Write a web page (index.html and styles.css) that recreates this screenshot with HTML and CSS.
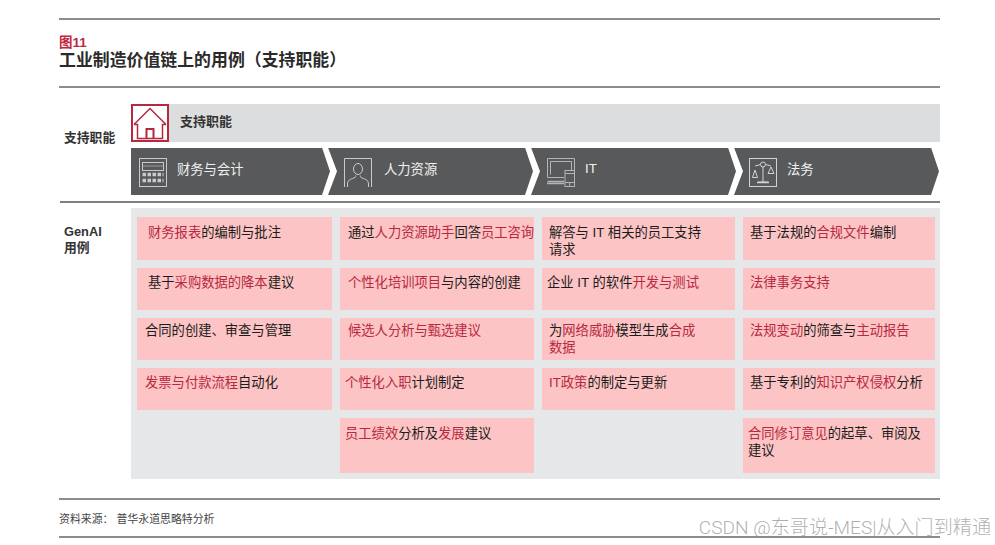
FILE: index.html
```html
<!DOCTYPE html>
<html lang="zh-CN">
<head>
<meta charset="utf-8">
<title>工业制造价值链上的用例（支持职能）</title>
<link rel="stylesheet" href="styles.css">
</head>
<body>
<main class="page">
  <div class="rule"></div>
  <header class="head">
    <div class="fig">图11</div>
    <h1 class="title">工业制造价值链上的用例（支持职能）</h1>
  </header>
  <div class="rule"></div>

  <section class="support">
    <div class="label label-support">支持职能</div>
    <div class="support-main">
      <div class="bar">
        <div class="home">
          <svg viewBox="0 0 34 34" width="34" height="34" fill="none" stroke="#b5283f" stroke-width="1.5">
            <path d="M1 18.5 17 2.5l16 16"/>
            <path d="M1 18.5h3.5V32.500h25V18.500H33"/>
            <path d="M13.500 32v-9h7v9" stroke-width="2"/>
          </svg>
        </div>
        <span class="bar-text">支持职能</span>
      </div>
      <div class="chevrons">
        <div class="chev chev-first">
          <svg class="ico" viewBox="0 0 28 29" fill="none" stroke="#c9cacb" stroke-width="1">
            <rect x=".5" y=".5" width="27" height="28"/>
            <rect x="3.500" y="4.500" width="21" height="8"/>
            <path d="M3.500 8h21" stroke-width=".6"/>
            <path stroke-width="3.500" stroke-dasharray="3.500 1.500" d="M3.500 16.500h21M3.500 22.500h21"/>
          </svg>
          <span class="chev-text">财务与会计</span>
        </div>
        <div class="chev">
          <svg class="ico" viewBox="0 0 28 29" fill="none" stroke="#c9cacb" stroke-width="1">
            <path d="M.5 29V.5h27V29"/>
            <ellipse cx="14" cy="11" rx="4.500" ry="5.500"/>
            <path d="M3.500 29v-3c0-5 5-5 7.500-6.500 .6-.5 .6-1 .6-2M24.500 29v-3c0-5-5-5-7.500-6.500-.6-.5-.6-1-.6-2"/>
          </svg>
          <span class="chev-text chev-text-wide">人力资源</span>
        </div>
        <div class="chev">
          <svg class="ico" viewBox="0 0 28 29" fill="none" stroke="#b4b5b6" stroke-width="1">
            <path d="M17 19.500H.5V.5h27v12"/>
            <path d="M3.500 16.500V3.500h21v9"/>
            <path d="M.5 23.500H17M0 25.500h17" stroke-width="1.300"/>
            <rect x="18" y="12.500" width="9.500" height="16" fill="#58595b"/>
            <path d="M18 15.500h9.500M18 24.500h9.500M22.700 24.500v4"/>
          </svg>
          <span class="chev-text">IT</span>
        </div>
        <div class="chev chev-last">
          <svg class="ico" viewBox="0 0 28 29" fill="none" stroke="#d2d3d4" stroke-width="1">
            <rect x=".5" y=".5" width="27" height="28"/>
            <circle cx="14" cy="6.500" r="2.500"/>
            <path d="M14 9v15M9 24h10" />
            <path d="M8 24.500h12" stroke-width="1.500"/>
            <path d="M11.500 6.500 6 8M16.500 6.500 22 8"/>
            <path d="M6 12 3.500 19.500h5ZM22 9l-3 6.500h6Z"/>
          </svg>
          <span class="chev-text">法务</span>
        </div>
      </div>
    </div>
  </section>

  <div class="rule rule-thin"></div>

  <section class="usecases">
    <div class="label label-gen">GenAI<br>用例</div>
    <div class="grid">
      <div class="cell ind"><em>财务报表</em>的编制与批注</div>
      <div class="cell nowrap">通过<em>人力资源助手</em>回答<em>员工咨询</em></div>
      <div class="cell">解答与 IT 相关的员工支持<br>请求</div>
      <div class="cell">基于法规的<em>合规文件</em>编制</div>

      <div class="cell ind r2">基于<em>采购数据的降本</em>建议</div>
      <div class="cell r2"><em>个性化培训项目</em>与内容的创建</div>
      <div class="cell r2 out">企业 IT 的软件<em>开发与测试</em></div>
      <div class="cell r2"><em>法律事务支持</em></div>

      <div class="cell r3">合同的创建、审查与管理</div>
      <div class="cell r3"><em>候选人分析与甄选建议</em></div>
      <div class="cell r3">为<em>网络威胁</em>模型生成<em>合成</em><br><em>数据</em></div>
      <div class="cell r3"><em>法规变动</em>的筛查与<em>主动报告</em></div>

      <div class="cell r2"><em>发票与付款流程</em>自动化</div>
      <div class="cell r2 out"><em>个性化入职</em>计划制定</div>
      <div class="cell r2"><em>IT政策</em>的制定与更新</div>
      <div class="cell r2">基于专利的<em>知识产权侵权</em>分析</div>

      <div class="blank"></div>
      <div class="cell out"><em>员工绩效</em>分析及<em>发展</em>建议</div>
      <div class="blank"></div>
      <div class="cell out"><em>合同修订意见</em>的起草、审阅及<br>建议</div>
    </div>
  </section>

  <div class="rule rule-foot"></div>
  <footer class="foot">资料来源：&nbsp;普华永道思略特分析</footer>
  <div class="rule"></div>
</main>
<div class="watermark">CSDN @东哥说-MES|从入门到精通</div>
</body>
</html>
```

FILE: styles.css
```css
* { box-sizing: border-box; }

html, body {
  margin: 0;
  height: 545px;
  overflow: hidden;
  background: #fff;
}

body {
  position: relative;
  font-family: "Liberation Sans", "Noto Sans CJK SC", sans-serif;
  color: #222;
}

.page {
  width: 940px;
  padding: 18px 0 0 59px;
}

.rule {
  height: 2px;
  background: #8b8c8d;
}

.rule-thin {
  height: 2px;
  margin: 6px 0 0 1px;
  background: #7f8081;
}

.rule-foot {
  margin-top: 19px;
}

.head {
  height: 66px;
  padding-top: 15px;
}

.fig {
  font-size: 13.500px;
  line-height: 16px;
  font-weight: 700;
  color: #c0283f;
}

.title {
  margin: 0;
  font-size: 16.900px;
  line-height: 19px;
  font-weight: 700;
  color: #2a2a2a;
}

.support,
.usecases {
  display: flex;
}

.support {
  margin-top: 16px;
}

.label {
  width: 72px;
  flex: none;
  padding-left: 5px;
  font-size: 12.800px;
  line-height: 16px;
  font-weight: 700;
  color: #333;
}

.label-support {
  padding-top: 26px;
}

.label-gen {
  padding-top: 16px;
}

.support-main {
  width: 809px;
}

.bar {
  display: flex;
  align-items: center;
  height: 38px;
  background: #dcddde;
}

.home {
  display: flex;
  align-items: center;
  justify-content: center;
  width: 38px;
  height: 38px;
  background: #fff;
  border: 2px solid #b5283f;
}

.bar-text {
  margin: 0 0 5px 11px;
  font-size: 13px;
  font-weight: 700;
  color: #333;
}

.chevrons {
  display: flex;
  margin-top: 5.500px;
  height: 47.500px;
}

.chev {
  display: flex;
  align-items: center;
  width: 205px;
  margin-left: -2px;
  padding-left: 16px;
  background: #58595b;
  clip-path: polygon(0 0, calc(100% - 8px) 0, 100% 50%, calc(100% - 8px) 100%, 0 100%, 9px 50%);
}

.chev-first {
  width: 199px;
  margin-left: 0;
  padding-left: 8px;
  clip-path: polygon(0 0, calc(100% - 8px) 0, 100% 50%, calc(100% - 8px) 100%, 0 100%);
}

.chev-last {
  padding-left: 15px;
}

.ico {
  flex: none;
  width: 28px;
  height: 29px;
  margin-top: 3px;
}

.chev-text {
  margin: 0 0 6px 10px;
  font-size: 13.300px;
  color: #f0f0f0;
}

.chev-text-wide {
  margin-left: 12px;
}

.usecases {
  margin-top: 5px;
}

.grid {
  display: grid;
  grid-template-columns: 195px 194px 193px 192px;
  grid-template-rows: 43px 42px 42px 42px 55px;
  column-gap: 8px;
  row-gap: 8px;
  width: 810px;
  height: 271px;
  padding: 9px 5px 6px 6px;
  background: #e6e7e8;
}

.cell {
  padding: 7px 0 0 8px;
  background: #fcc4c4;
  font-size: 13.300px;
  line-height: 17px;
  color: #1c1c1c;
}

.cell:nth-child(4n+3),
.cell:nth-child(4n) {
  padding-left: 7px;
}

.cell em {
  font-style: normal;
  color: #b8283f;
}

.nowrap {
  white-space: nowrap;
}

.ind {
  padding-left: 11px;
}

.cell.out {
  padding-left: 5px;
}

.r2 {
  padding-top: 6px;
}

.r3 {
  padding-top: 4px;
}

.foot {
  height: 36px;
  padding-top: 12px;
  font-size: 10.900px;
  line-height: 14px;
  color: #444;
}

.watermark {
  position: absolute;
  right: 4px;
  top: 518px;
  font-family: Roboto, "Noto Sans CJK SC", sans-serif;
  font-size: 19.100px;
  font-weight: 300;
  line-height: 20px;
  color: rgba(140, 140, 140, 0.7);
  white-space: nowrap;
}
```
